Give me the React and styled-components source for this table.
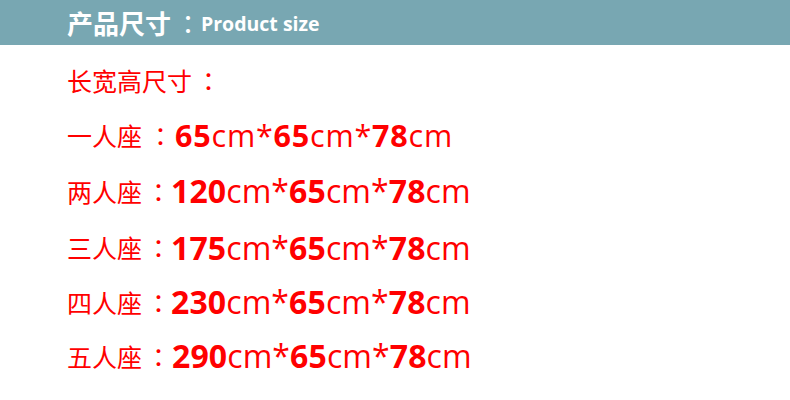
import React from "react"
import styled, { createGlobalStyle } from "styled-components"

const GlobalStyle = createGlobalStyle`
  html, body {
    margin: 0;
    padding: 0;
    background: #ffffff;
  }
  body {
    font-family: "Noto Sans CJK SC", "Noto Sans", sans-serif;
  }
`

const Page = styled.div`
  width: 790px;
  height: 400px;
  overflow: hidden;
  background: #ffffff;
`

const Header = styled.div`
  height: 45px;
  background: #78a7b2;
  display: flex;
  align-items: center;
  padding-left: 67px;
  color: #ffffff;
  font-weight: 700;
`

const HeaderCn = styled.span`
  font-size: 26px;
`

const Colon = styled.span`
  display: inline-block;
  width: 1em;
  padding-left: ${(p) => p.$pad ?? 4}px;
  text-align: center;
  font-family: "Noto Sans CJK TC", "Noto Sans CJK SC", sans-serif;
  font-weight: 400;
  margin-right: ${(p) => p.$gap || 0}px;
`

const HeaderEn = styled.span`
  font-family: "Open Sans", "Noto Sans", sans-serif;
  font-size: 19.5px;
  margin-top: 2px;
`

const List = styled.div`
  padding: 7px 0 0 67px;
  display: flex;
  flex-direction: column;
  color: #ff0000;
`

const Row = styled.div`
  height: ${(p) => p.$h || 55}px;
  display: flex;
  align-items: center;
  white-space: nowrap;
`

const Label = styled.span`
  font-size: 25px;
`

const Dims = styled.span`
  font-family: "Open Sans", "Noto Sans", sans-serif;
  font-size: ${(p) => p.$size}px;
  letter-spacing: ${(p) => p.$ls}px;
`

const Num = styled.span`
  font-weight: 700;
`

const sizes = [
  { label: "一人座", w: "65", h: 55, pad: 6, gap: 2, size: 30.5, ls: 0.8 },
  { label: "两人座", w: "120", h: 57, pad: 4, gap: 0, size: 32, ls: 0.1 },
  { label: "三人座", w: "175", h: 56, pad: 4, gap: 0, size: 32, ls: 0.1 },
  { label: "四人座", w: "230", h: 53, pad: 4, gap: 0, size: 32, ls: 0.1 },
  { label: "五人座", w: "290", h: 55, pad: 4, gap: 1, size: 32, ls: 0.1 },
]

export default function App() {
  return (
    <Page>
      <GlobalStyle />
      <Header>
        <HeaderCn>
          产品尺寸<Colon $gap={0}>：</Colon>
        </HeaderCn>
        <HeaderEn>Product size</HeaderEn>
      </Header>
      <List>
        <Row>
          <Label>
            长宽高尺寸<Colon>：</Colon>
          </Label>
        </Row>
        {sizes.map((s) => (
          <Row key={s.label} $h={s.h}>
            <Label>
              {s.label}
              <Colon $pad={s.pad} $gap={s.gap}>：</Colon>
            </Label>
            <Dims $size={s.size} $ls={s.ls}>
              <Num>{s.w}</Num>cm*<Num>65</Num>cm*<Num>78</Num>cm
            </Dims>
          </Row>
        ))}
      </List>
    </Page>
  )
}
